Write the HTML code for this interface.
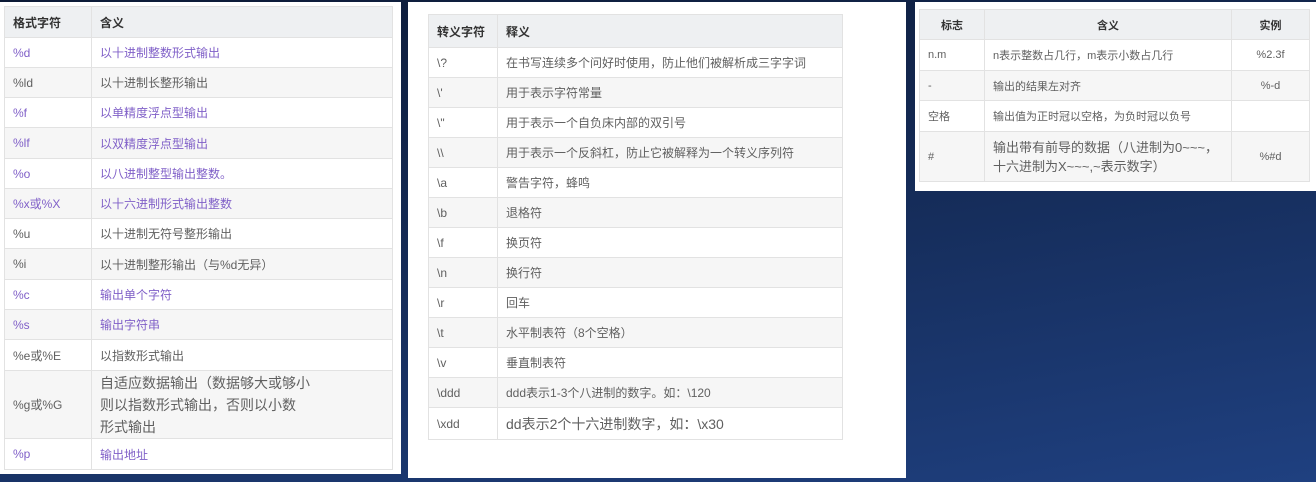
<!DOCTYPE html>
<html><head><meta charset="utf-8"><style>
*{margin:0;padding:0;box-sizing:border-box}
html,body{width:1316px;height:482px;overflow:hidden}
body{background:linear-gradient(170deg,#0c1a36 0%,#142a55 45%,#1f4080 100%);font-family:"Liberation Sans","Noto Sans CJK SC",sans-serif;position:relative}
.panel{position:absolute;background:#fff}
table{position:absolute;border-collapse:collapse;table-layout:fixed;font-size:12px;color:#606060}
td,th{border:1px solid #e2e2e2;padding:0 0 0 8px;text-align:left;vertical-align:middle;font-weight:normal;white-space:nowrap}
th{background:#eef0f2;color:#333;font-weight:bold}
tr:nth-child(odd) td{background:#f6f6f6}
.p{color:#8060c8}
.big{font-size:14px;line-height:22px}
.c{text-align:center;padding:0}
</style></head><body>

<div class="panel" style="left:0;top:2px;width:401px;height:472px"></div>
<table style="left:4px;top:6px;width:389px">
<col style="width:87px"><col>
<tr style="height:31px"><th>格式字符</th><th>含义</th></tr>
<tr style="height:30px"><td class="p">%d</td><td class="p">以十进制整数形式输出</td></tr>
<tr style="height:30px"><td>%ld</td><td>以十进制长整形输出</td></tr>
<tr style="height:30px"><td class="p">%f</td><td class="p">以单精度浮点型输出</td></tr>
<tr style="height:31px"><td class="p">%lf</td><td class="p">以双精度浮点型输出</td></tr>
<tr style="height:30px"><td class="p">%o</td><td class="p">以八进制整型输出整数。</td></tr>
<tr style="height:30px"><td class="p">%x或%X</td><td class="p">以十六进制形式输出整数</td></tr>
<tr style="height:30px"><td>%u</td><td>以十进制无符号整形输出</td></tr>
<tr style="height:31px"><td>%i</td><td>以十进制整形输出（与%d无异）</td></tr>
<tr style="height:30px"><td class="p">%c</td><td class="p">输出单个字符</td></tr>
<tr style="height:30px"><td class="p">%s</td><td class="p">输出字符串</td></tr>
<tr style="height:31px"><td>%e或%E</td><td>以指数形式输出</td></tr>
<tr style="height:68px"><td>%g或%G</td><td class="big">自适应数据输出（数据够大或够小<br>则以指数形式输出，否则以小数<br>形式输出</td></tr>
<tr style="height:31px"><td class="p">%p</td><td class="p">输出地址</td></tr>
</table>

<div class="panel" style="left:408px;top:2px;width:498px;height:476px"></div>
<table style="left:428px;top:14px;width:415px">
<col style="width:69px"><col>
<tr style="height:33px"><th>转义字符</th><th>释义</th></tr>
<tr style="height:30px"><td>\?</td><td>在书写连续多个问好时使用，防止他们被解析成三字字词</td></tr>
<tr style="height:30px"><td>\'</td><td>用于表示字符常量</td></tr>
<tr style="height:30px"><td>\"</td><td>用于表示一个自负床内部的双引号</td></tr>
<tr style="height:30px"><td>\\</td><td>用于表示一个反斜杠，防止它被解释为一个转义序列符</td></tr>
<tr style="height:30px"><td>\a</td><td>警告字符，蜂鸣</td></tr>
<tr style="height:30px"><td>\b</td><td>退格符</td></tr>
<tr style="height:30px"><td>\f</td><td>换页符</td></tr>
<tr style="height:30px"><td>\n</td><td>换行符</td></tr>
<tr style="height:30px"><td>\r</td><td>回车</td></tr>
<tr style="height:30px"><td>\t</td><td>水平制表符（8个空格）</td></tr>
<tr style="height:30px"><td>\v</td><td>垂直制表符</td></tr>
<tr style="height:30px"><td>\ddd</td><td>ddd表示1-3个八进制的数字。如：\120</td></tr>
<tr style="height:32px"><td>\xdd</td><td style="font-size:14px">dd表示2个十六进制数字，如：\x30</td></tr>
</table>

<div class="panel" style="left:915px;top:2px;width:401px;height:189px"></div>
<table style="left:919px;top:9px;width:391px;font-size:11px">
<col style="width:65px"><col style="width:247px"><col>
<tr style="height:30px"><th class="c">标志</th><th class="c">含义</th><th class="c">实例</th></tr>
<tr style="height:31px"><td>n.m</td><td>n表示整数占几行，m表示小数占几行</td><td class="c">%2.3f</td></tr>
<tr style="height:30px"><td>-</td><td>输出的结果左对齐</td><td class="c">%-d</td></tr>
<tr style="height:31px"><td>空格</td><td>输出值为正时冠以空格，为负时冠以负号</td><td class="c"></td></tr>
<tr style="height:50px"><td>#</td><td style="font-size:13px;line-height:19px">输出带有前导的数据（八进制为0~~~，<br>十六进制为X~~~,~表示数字）</td><td class="c">%#d</td></tr>
</table>
</body></html>
